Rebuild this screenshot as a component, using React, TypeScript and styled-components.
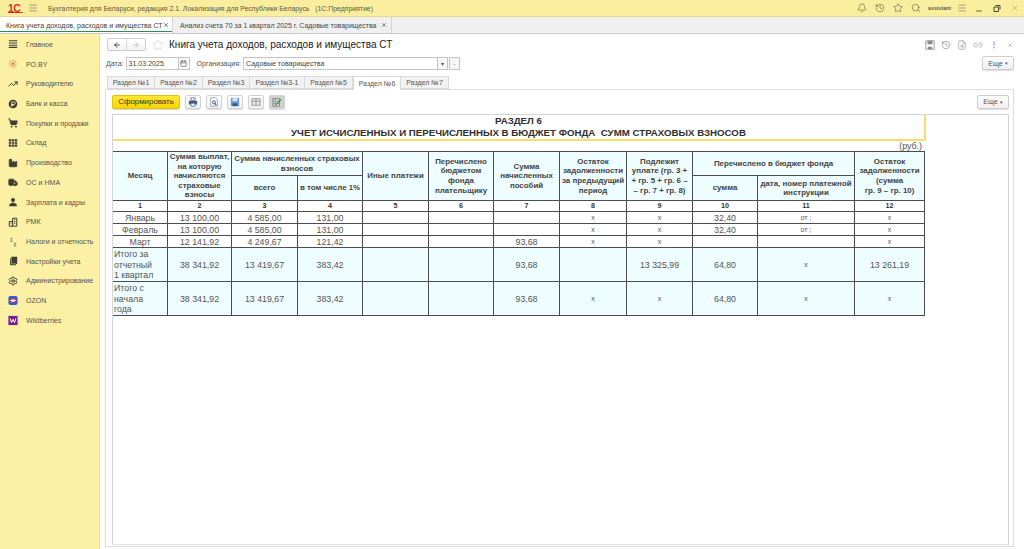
import React from 'react';
import styled, { createGlobalStyle } from 'styled-components';
import {
  Bell,
  History,
  Star,
  Search,
  Link2,
  X,
  ArrowLeft,
  ArrowRight,
  Settings,
  ShoppingCart,
  TrendingUp,
  Truck,
  FileSearch,
  Calendar,
  Factory,
  Menu,
} from 'lucide-react';

const FONT = '"Liberation Sans", Arial, sans-serif';

const GlobalStyle = createGlobalStyle`
  html, body { margin: 0; padding: 0; height: 100%; background: #fff; overflow: hidden; }
  body { font-family: ${FONT}; color: #333; }
  #root { height: 100%; }
`;

const Page = styled.div`
  width: 1024px;
  height: 549px;
  display: grid;
  grid-template-rows: 17px 17px 1fr;
  grid-template-columns: 100px 1fr;
  overflow: hidden;
`;

const TopBar = styled.header`
  grid-column: 1 / 3;
  display: flex;
  align-items: center;
  background: #fbed9e;
  border-bottom: 1px solid #e8d88a;
  padding-left: 8px;
  box-sizing: border-box;
`;

const Logo = styled.div`
  width: 15px;
  font: bold 10.5px ${FONT};
  color: #d6322d;
  letter-spacing: -0.5px;
  line-height: 8px;
  border-bottom: 1px solid #d6322d;
`;

const Burger = styled.div`
  display: flex;
  margin-left: 5px;
  color: #6b6646;
`;

const AppTitle = styled.div`
  margin-left: 10px;
  font-size: 6.9px;
  color: #5e5a3e;
  white-space: nowrap;
  flex: 1;
`;

const TopIcons = styled.div`
  display: flex;
  align-items: center;
  gap: 8px;
  color: #5a5640;
  margin-right: 3px;
`;

const UserName = styled.span`
  font-size: 5.3px;
  font-weight: bold;
  color: #5e5a3e;
  margin-right: -2px;
  margin-left: -1px;
`;

const WinButton = styled.span`
  width: 18px;
  display: flex;
  align-items: center;
  justify-content: center;
  color: #6b6646;
`;

const TabStrip = styled.nav`
  grid-column: 1 / 3;
  display: flex;
  background: #f0f0f0;
  border-bottom: 1px solid #c9c9c9;
  box-sizing: border-box;
`;

const OpenTab = styled.div<{ $active?: boolean; $w: number }>`
  width: ${(p) => p.$w}px;
  box-sizing: border-box;
  display: flex;
  align-items: center;
  justify-content: space-between;
  padding: 0 ${(p) => (p.$active ? '3px 0 6px' : '4px 0 7px')};
  font-size: ${(p) => (p.$active ? 7.05 : 6.95)}px;
  white-space: nowrap;
  color: #444;
  background: ${(p) => (p.$active ? '#fff' : 'transparent')};
  border-right: 1px solid #d4d4d4;
  box-shadow: ${(p) => (p.$active ? 'inset 0 -1px 0 #fff, inset 0 -2px 0 #2e8b57' : 'none')};
`;

const Side = styled.aside`
  background: #fbf0a4;
  border-right: 1px solid #e6dc9c;
  box-sizing: border-box;
  padding-top: 0.5px;
`;

const SideItem = styled.div`
  height: 19.72px;
  display: flex;
  align-items: center;
  padding-left: 8px;
  gap: 8px;
  font-size: 7.05px;
  color: #555;
  white-space: nowrap;
`;

const SideIcon = styled.div`
  width: 10px;
  height: 10px;
  display: flex;
  align-items: center;
  justify-content: center;
  color: #3d3d35;
`;

const Main = styled.main`
  min-width: 0;
  display: flex;
  flex-direction: column;
  background: #fff;
  padding: 3px 10px 2px 5px;
  box-sizing: border-box;
`;

const HeadRow = styled.div`
  display: flex;
  align-items: center;
  height: 15px;
  padding-left: 2px;
`;

const NavGroup = styled.div`
  display: flex;
  width: 39px;
  height: 13px;
  box-sizing: border-box;
  border: 1px solid #cfcfcf;
  border-radius: 2px;
  background: linear-gradient(#fff, #f3f3f3);
  color: #444;
`;

const NavBtn = styled.div<{ $off?: boolean }>`
  flex: 1;
  display: flex;
  align-items: center;
  justify-content: center;
  color: ${(p) => (p.$off ? '#aaa' : '#333')};
  & + & { border-left: 1px solid #d8d8d8; }
`;

const FavStar = styled.div`
  display: flex;
  margin-left: 6px;
  color: #c4c4c4;
`;

const FormTitle = styled.h1`
  margin: 0 0 0 5px;
  font-size: 10.05px;
  font-weight: normal;
  color: #222;
  white-space: nowrap;
  flex: 1;
`;

const FormTools = styled.div`
  display: flex;
  gap: 6px;
  align-items: center;
  color: #8a8a8a;
  margin-right: 1px;
`;

const MoreDots = styled.span`
  width: 10px;
  text-align: center;
  font-size: 8px;
  font-weight: bold;
`;

const CloseForm = styled.span`
  display: flex;
  margin-left: 2px;
`;

const FieldRow = styled.div`
  display: flex;
  align-items: center;
  height: 14px;
  margin-top: 4px;
  padding-left: 1px;
  font-size: 7.05px;
  color: #555;
`;

const FieldLabel = styled.span`
  margin-left: 7px;
`;

const Input = styled.div<{ $w: number }>`
  width: ${(p) => p.$w}px;
  height: 13px;
  box-sizing: border-box;
  border: 1px solid #c4c4c4;
  display: flex;
  align-items: center;
  padding-left: 2px;
  color: #444;
  margin-left: 2px;
  background: #fff;
`;

const InputBtn = styled.div<{ $w?: number; $gap?: number }>`
  width: ${(p) => p.$w ?? 11}px;
  height: 13px;
  margin-left: ${(p) => p.$gap ?? 0}px;
  box-sizing: border-box;
  border: 1px solid #c4c4c4;
  border-left-width: ${(p) => (p.$gap ? 1 : 0)}px;
  display: flex;
  align-items: center;
  justify-content: center;
  font-size: 6px;
  color: #555;
  background: #f7f7f7;
`;

const MoreBtn = styled.div`
  width: 32px;
  height: 14px;
  box-sizing: border-box;
  border: 1px solid #cdcdcd;
  border-radius: 2px;
  background: linear-gradient(#fff, #efefef);
  box-shadow: 0 1px 1px #ddd;
  display: flex;
  align-items: center;
  justify-content: center;
  gap: 2px;
  font-size: 7.2px;
  color: #555;
`;

const Caret = styled.span`
  font-size: 5px;
`;

const Spacer = styled.div`
  flex: 1;
`;

const SectionTabs = styled.div`
  display: flex;
  height: 13px;
  margin-top: 6px;
  padding-left: 2px;
  position: relative;
  z-index: 1;
`;

const SectionTab = styled.div<{ $active?: boolean; $w: number }>`
  width: ${(p) => p.$w}px;
  height: ${(p) => (p.$active ? 14 : 13)}px;
  box-sizing: border-box;
  display: flex;
  align-items: center;
  justify-content: center;
  font-size: 7.05px;
  color: #555;
  border: 1px solid #d9d9d9;
  border-left-width: ${(p) => (p.$active ? 1 : 0)}px;
  border-bottom-width: ${(p) => (p.$active ? 0 : 1)}px;
  background: ${(p) => (p.$active ? '#fff' : '#f2f2f2')};
  &:first-child { border-left-width: 1px; }
`;

const Panel = styled.section`
  flex: 1;
  min-height: 0;
  display: flex;
  flex-direction: column;
  border: 1px solid #dedede;
  padding: 4px 4px 1px 6px;
  box-sizing: border-box;
`;

const Toolbar = styled.div`
  display: flex;
  align-items: center;
  height: 15px;
  flex: none;
`;

const PrimaryBtn = styled.div`
  width: 68px;
  height: 14px;
  box-sizing: border-box;
  border: 1px solid #e0c400;
  border-radius: 2px;
  background: linear-gradient(#ffe733, #fad400);
  box-shadow: 0 1px 1px #d8d8d8;
  font-size: 7.9px;
  color: #333;
  display: flex;
  align-items: center;
  justify-content: center;
`;

const ToolBtn = styled.div<{ $pressed?: boolean }>`
  width: 16px;
  height: 14px;
  margin-left: 5px;
  box-sizing: border-box;
  border: 1px solid #d2d2d2;
  border-radius: 2px;
  background: ${(p) => (p.$pressed ? '#d0d0d0' : 'linear-gradient(#fff, #f0f0f0)')};
  box-shadow: 0 1px 1px #ddd;
  display: flex;
  align-items: center;
  justify-content: center;
`;

const Report = styled.div`
  flex: 1;
  min-height: 0;
  margin-top: 5px;
  border: 1px solid #d4d4d4;
  border-bottom-color: #e4e4e4;
  overflow: hidden;
`;

const ReportHead = styled.div`
  width: 813px;
  height: 26px;
  box-sizing: border-box;
  border-right: 2px solid #fbdc6a;
  border-bottom: 2px solid #fbdc6a;
  text-align: center;
  font-size: 9.7px;
  font-weight: bold;
  line-height: 11.5px;
  color: #2f2f2f;
`;

const Unit = styled.div`
  width: 809px;
  height: 10px;
  text-align: right;
  font-size: 8.8px;
  line-height: 10px;
  color: #555;
`;

const Table = styled.table`
  border-collapse: collapse;
  table-layout: fixed;
  width: 812px;
  margin-left: -1px;
  color: #444;
`;

const Th = styled.th`
  background: #eefdff;
  border: 1px solid #4d4d4d;
  padding: 0;
  font-size: 7.9px;
  font-weight: bold;
  line-height: 9.6px;
  color: #444;
  text-align: center;
  vertical-align: middle;
  overflow: hidden;
  white-space: nowrap;
`;

const HeadRowTop = styled.tr`
  height: 24px;
`;

const HeadRowSub = styled.tr`
  height: 24px;
`;

const NumCell = styled.td`
  height: 10px;
  padding: 0;
  border: 1px solid #4d4d4d;
  font-size: 7.2px;
  font-weight: bold;
  line-height: 10px;
  text-align: center;
  color: #333;
`;

const Td = styled.td<{ $total?: boolean; $small?: boolean; $left?: boolean }>`
  height: 10px;
  padding: ${(p) => (p.$left ? '1px 1px 0' : '1px 0 0')};
  border: 1px solid #4d4d4d;
  background: ${(p) => (p.$total ? '#eefdff' : '#fff')};
  font-size: ${(p) => (p.$small ? 7 : 8.8)}px;
  line-height: ${(p) => (p.$left ? '10.7px' : '10px')};
  text-align: ${(p) => (p.$left ? 'left' : 'center')};
  color: #555;
`;

const TotalRow = styled.tr`
  height: 33px;
`;

const WIDTHS = [55, 64, 66, 65, 66, 65, 66, 67, 66, 65, 97, 70];

type Row = { cells: string[] };

const MONTHS: Row[] = [
  { cells: ['Январь', '13 100,00', '4 585,00', '131,00', '', '', '', 'x', 'x', '32,40', 'от ;', 'x'] },
  { cells: ['Февраль', '13 100,00', '4 585,00', '131,00', '', '', '', 'x', 'x', '32,40', 'от ;', 'x'] },
  { cells: ['Март', '12 141,92', '4 249,67', '121,42', '', '', '93,68', 'x', 'x', '', '', 'x'] },
];

const TOTALS: { title: React.ReactNode; cells: string[] }[] = [
  {
    title: <>Итого за<br />отчетный<br />1 квартал</>,
    cells: ['38 341,92', '13 419,67', '383,42', '', '', '93,68', '', '13 325,99', '64,80', 'x', '13 261,19'],
  },
  {
    title: <>Итого с<br />начала<br />года</>,
    cells: ['38 341,92', '13 419,67', '383,42', '', '', '93,68', 'x', 'x', '64,80', 'x', 'x'],
  },
];

const Ico = ({ children, size = 10 }: { children: React.ReactNode; size?: number }) => (
  <svg width={size} height={size} viewBox="0 0 12 12">{children}</svg>
);

const INK = '#3d3d35';

const SIDE_ITEMS: { label: string; icon: React.ReactNode }[] = [
  {
    label: 'Главное',
    icon: (
      <Ico>
        <path d="M1 2h10M1 4.7h10M1 7.4h10M1 10h10" stroke={INK} strokeWidth="1.3" />
      </Ico>
    ),
  },
  {
    label: 'РО.BY',
    icon: (
      <Ico>
        <path d="M6 1v10M1 6h10M2.5 2.5l7 7M9.5 2.5l-7 7" stroke="#e8662a" strokeWidth="1" strokeDasharray="2 1" />
      </Ico>
    ),
  },
  { label: 'Руководителю', icon: <TrendingUp size={10} strokeWidth={2.4} /> },
  {
    label: 'Банк и касса',
    icon: (
      <Ico>
        <circle cx="6" cy="6" r="5.2" fill={INK} />
        <path d="M4.5 9V3.4h2.6a1.5 1.5 0 010 3.2H3.6M3.6 7.8h3" stroke="#fbf0a4" strokeWidth="1" fill="none" />
      </Ico>
    ),
  },
  { label: 'Покупки и продажи', icon: <ShoppingCart size={10} strokeWidth={2.4} fill={INK} /> },
  {
    label: 'Склад',
    icon: (
      <Ico>
        <path d="M1 1.5h10v9H1z" fill={INK} />
        <path d="M1 4.5h10M1 7.5h10M4.3 1.5v9M7.7 1.5v9" stroke="#fbf0a4" strokeWidth="0.8" />
      </Ico>
    ),
  },
  { label: 'Производство', icon: <Factory size={10} strokeWidth={2} fill={INK} /> },
  { label: 'ОС и НМА', icon: <Truck size={11} strokeWidth={2} fill={INK} /> },
  {
    label: 'Зарплата и кадры',
    icon: (
      <Ico>
        <circle cx="6" cy="3.5" r="2.4" fill={INK} />
        <path d="M1.5 11V9l3-2h3l3 2v2z" fill={INK} />
      </Ico>
    ),
  },
  {
    label: 'РМК',
    icon: (
      <Ico>
        <path d="M1.5 5.5h4v5.5h-4zM5.5 1.5h5v9.5h-5z" fill="none" stroke={INK} strokeWidth="1.2" />
        <path d="M3 7.5h1M7 3.5h2M7 5.5h2M7 7.5h2" stroke={INK} strokeWidth="1" />
      </Ico>
    ),
  },
  {
    label: 'Налоги и отчетность',
    icon: (
      <Ico>
        <path d="M3 1.5h2.5M3 3.5h2M2.5 5.2h3M7 7.5h3M7 9.5h2.5M7 10.8h3" stroke="#66665a" strokeWidth="0.9" />
      </Ico>
    ),
  },
  {
    label: 'Настройки учета',
    icon: (
      <Ico>
        <path d="M4 1h7v8.5H9.5V11H2.5V3H4z" fill={INK} />
        <path d="M4 3v6.5h5.5" stroke="#fbf0a4" strokeWidth="0.6" fill="none" />
      </Ico>
    ),
  },
  { label: 'Администрирование', icon: <Settings size={10} strokeWidth={2.4} /> },
  {
    label: 'OZON',
    icon: (
      <svg width="11" height="11" viewBox="0 0 12 12">
        <rect x="0.5" y="0.5" width="11" height="11" rx="2.5" fill="#1f5fe0" />
        <ellipse cx="6" cy="6" rx="4" ry="2" fill="#fff" stroke="#e6283c" strokeWidth="1.3" />
      </svg>
    ),
  },
  {
    label: 'Wildberries',
    icon: (
      <svg width="11" height="11" viewBox="0 0 12 12">
        <rect x="0.5" y="0.5" width="11" height="11" fill="#7b1a8f" />
        <path d="M2.5 3.5l1.7 5 1.8-4 1.8 4 1.7-5" stroke="#fff" strokeWidth="1.2" fill="none" />
      </svg>
    ),
  },
];

const SECTIONS = [
  { label: 'Раздел №1', w: 48 },
  { label: 'Раздел №2', w: 48 },
  { label: 'Раздел №3', w: 47 },
  { label: 'Раздел №3-1', w: 55 },
  { label: 'Раздел №5', w: 48 },
  { label: 'Раздел №6', w: 48, active: true },
  { label: 'Раздел №7', w: 48 },
];

const App = () => {
  return (
    <Page>
      <GlobalStyle />
      <TopBar>
        <Logo>1С</Logo>
        <Burger><Menu size={10} strokeWidth={1.5} /></Burger>
        <AppTitle>Бухгалтерия для Беларуси, редакция 2.1. Локализация для Республики Беларусь&nbsp;&nbsp; (1С:Предприятие)</AppTitle>
        <TopIcons>
          <Bell size={10} strokeWidth={1.4} />
          <History size={10} strokeWidth={1.4} />
          <Star size={10} strokeWidth={1.4} />
          <Search size={10} strokeWidth={1.4} />
          <UserName>assistant</UserName>
          <Menu size={10} strokeWidth={1.2} />
        </TopIcons>
        <WinButton>
          <svg width="8" height="8" viewBox="0 0 8 8"><path d="M1 7h6" stroke="#6b6646" strokeWidth="1" /></svg>
        </WinButton>
        <WinButton>
          <svg width="8" height="8" viewBox="0 0 8 8">
            <path d="M2.5 1.5h4.500v4M1 3h4.500v4.500H1z" fill="none" stroke="#4f4b30" strokeWidth="1" />
          </svg>
        </WinButton>
        <WinButton><X size={8} strokeWidth={1.3} color="#8a8560" /></WinButton>
      </TopBar>

      <TabStrip>
        <OpenTab $active $w={173}>
          Книга учета доходов, расходов и имущества СТ
          <X size={6} strokeWidth={2.5} />
        </OpenTab>
        <OpenTab $w={219}>
          Анализ счета 70 за 1 квартал 2025 г. Садовые товарищества
          <X size={6} strokeWidth={2.5} />
        </OpenTab>
      </TabStrip>

      <Side>
        {SIDE_ITEMS.map((item) => (
          <SideItem key={item.label}>
            <SideIcon>{item.icon}</SideIcon>
            {item.label}
          </SideItem>
        ))}
      </Side>

      <Main>
        <HeadRow>
          <NavGroup>
            <NavBtn><ArrowLeft size={8} strokeWidth={2.5} /></NavBtn>
            <NavBtn $off><ArrowRight size={8} strokeWidth={2} /></NavBtn>
          </NavGroup>
          <FavStar><Star size={12} strokeWidth={1} /></FavStar>
          <FormTitle>Книга учета доходов, расходов и имущества СТ</FormTitle>
          <FormTools>
            <svg width="10" height="10" viewBox="0 0 12 12">
              <path d="M1 1h10v10H1z" fill="none" stroke="#8a8a8a" strokeWidth="1" />
              <path d="M3 1h6v4H3zM3.500 8h5v3h-5z" fill="#8a8a8a" />
            </svg>
            <History size={10} strokeWidth={1.6} />
            <FileSearch size={10} strokeWidth={1.4} />
            <Link2 size={10} strokeWidth={1.4} />
            <MoreDots>⋮</MoreDots>
            <CloseForm><X size={6} strokeWidth={2} /></CloseForm>
          </FormTools>
        </HeadRow>

        <FieldRow>
          Дата:
          <Input $w={53}>31.03.2025</Input>
          <InputBtn><Calendar size={7} strokeWidth={2} /></InputBtn>
          <FieldLabel>Организация:</FieldLabel>
          <Input $w={195}>Садовые товарищества</Input>
          <InputBtn $w={10}>▾</InputBtn>
          <InputBtn $gap={1}>..</InputBtn>
          <Spacer />
          <MoreBtn>Еще <Caret>▾</Caret></MoreBtn>
        </FieldRow>

        <SectionTabs>
          {SECTIONS.map((s) => (
            <SectionTab key={s.label} $active={s.active} $w={s.w}>{s.label}</SectionTab>
          ))}
        </SectionTabs>

        <Panel>
          <Toolbar>
            <PrimaryBtn>Сформировать</PrimaryBtn>
            <ToolBtn>
              <svg width="10" height="10" viewBox="0 0 12 12">
                <path d="M3.500 1h5v3h-5z" fill="#fff" stroke="#44607f" strokeWidth="0.9" />
                <path d="M1 4.500h10v4.500H1z" fill="#44607f" />
                <path d="M3.500 7.500h5V11h-5z" fill="#fff" stroke="#44607f" strokeWidth="0.9" />
              </svg>
            </ToolBtn>
            <ToolBtn>
              <svg width="10" height="10" viewBox="0 0 12 12">
                <path d="M2 1h6l2 2v8H2z" fill="#fff" stroke="#8a8a8a" strokeWidth="0.9" />
                <circle cx="6" cy="6.500" r="1.800" fill="none" stroke="#2b5f94" strokeWidth="1.200" />
                <path d="M7.200 8l1.500 1.800" stroke="#2b5f94" strokeWidth="1.300" />
              </svg>
            </ToolBtn>
            <ToolBtn>
              <svg width="10" height="10" viewBox="0 0 12 12">
                <path d="M1 1h10v10H1z" fill="#6f9ccf" />
                <path d="M3 1.500h6v3.500H3z" fill="#dfe9f5" />
                <path d="M3 7.500h6V11H3z" fill="#2f5f94" />
              </svg>
            </ToolBtn>
            <ToolBtn>
              <svg width="10" height="10" viewBox="0 0 12 12">
                <path d="M1 2h10v8H1zM1 5h10M6 2v8" fill="#e6e6e6" stroke="#8c8c8c" strokeWidth="0.9" />
              </svg>
            </ToolBtn>
            <ToolBtn $pressed>
              <svg width="10" height="10" viewBox="0 0 12 12">
                <path d="M1 2h8v9H1z" fill="#dcdcdc" stroke="#666" strokeWidth="0.8" />
                <path d="M1 5h8M1 8h8M4 2v9" stroke="#666" strokeWidth="0.6" />
                <path d="M4 9l6-7 1.500 1.500L5 10z" fill="#3fa33f" />
              </svg>
            </ToolBtn>
            <Spacer />
            <MoreBtn>Еще <Caret>▾</Caret></MoreBtn>
          </Toolbar>

          <Report>
            <ReportHead>
              РАЗДЕЛ 6
              <br />
              УЧЕТ ИСЧИСЛЕННЫХ И ПЕРЕЧИСЛЕННЫХ В БЮДЖЕТ ФОНДА&nbsp; СУММ СТРАХОВЫХ ВЗНОСОВ
            </ReportHead>
            <Unit>(руб.)</Unit>
            <Table>
              <colgroup>
                {WIDTHS.map((w, i) => <col key={i} style={{ width: w }} />)}
              </colgroup>
              <thead>
                <HeadRowTop>
                  <Th rowSpan={2}>Месяц</Th>
                  <Th rowSpan={2}>Сумма выплат,<br />на которую<br />начисляются<br />страховые<br />взносы</Th>
                  <Th colSpan={2}>Сумма начисленных страховых<br />взносов</Th>
                  <Th rowSpan={2}>Иные платежи</Th>
                  <Th rowSpan={2}>Перечислено<br />бюджетом<br />фонда<br />плательщику</Th>
                  <Th rowSpan={2}>Сумма<br />начисленных<br />пособий</Th>
                  <Th rowSpan={2}>Остаток<br />задолженности<br />за предыдущий<br />период</Th>
                  <Th rowSpan={2}>Подлежит<br />уплате (гр. 3 +<br />+ гр. 5 + гр. 6 –<br />– гр. 7 + гр. 8)</Th>
                  <Th colSpan={2}>Перечислено в бюджет фонда</Th>
                  <Th rowSpan={2}>Остаток<br />задолженности<br />(сумма<br />гр. 9 – гр. 10)</Th>
                </HeadRowTop>
                <HeadRowSub>
                  <Th>всего</Th>
                  <Th>в том числе 1%</Th>
                  <Th>сумма</Th>
                  <Th>дата, номер платежной<br />инструкции</Th>
                </HeadRowSub>
              </thead>
              <tbody>
                <tr>
                  {WIDTHS.map((_, i) => <NumCell key={i}>{i + 1}</NumCell>)}
                </tr>
                {MONTHS.map((row) => (
                  <tr key={row.cells[0]}>
                    {row.cells.map((c, i) => (
                      <Td key={i} $small={c === 'x' || c === 'от ;'}>{c}</Td>
                    ))}
                  </tr>
                ))}
                {TOTALS.map((row, r) => (
                  <TotalRow key={r}>
                    <Td $total $left>{row.title}</Td>
                    {row.cells.map((c, i) => (
                      <Td key={i} $total $small={c === 'x'}>{c}</Td>
                    ))}
                  </TotalRow>
                ))}
              </tbody>
            </Table>
          </Report>
        </Panel>
      </Main>
    </Page>
  );
};

export default App;
